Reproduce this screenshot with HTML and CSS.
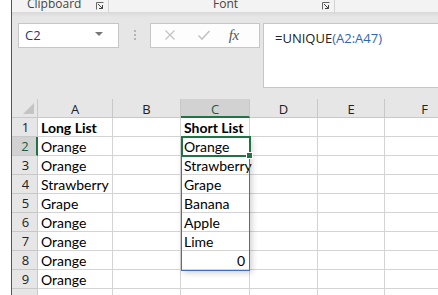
FILE: index.html
```html
<!DOCTYPE html>
<html>
<head>
<meta charset="utf-8">
<link rel="stylesheet" href="styles.css">
</head>
<body>
<div class="app">
  <div class="edge"></div>
  <div class="main">
    <div class="ribbon">
      <div class="group g-clip"><span class="glabel">Clipboard</span><span class="launch"><svg width="8" height="8" viewBox="0 0 8 8"><path d="M0.5 7.5V0.5H7.5" fill="none" stroke="#666" stroke-width="1"/><path d="M2 2L6.5 6.5M6.5 3V6.5H3" fill="none" stroke="#444" stroke-width="1"/></svg></span></div>
      <div class="group g-font"><span class="glabel">Font</span><span class="launch"><svg width="8" height="8" viewBox="0 0 8 8"><path d="M0.5 7.5V0.5H7.5" fill="none" stroke="#666" stroke-width="1"/><path d="M2 2L6.5 6.5M6.5 3V6.5H3" fill="none" stroke="#444" stroke-width="1"/></svg></span></div>
    </div>
    <div class="shadow"></div>
    <div class="fbar">
      <div class="namebox"><span class="ref">C2</span><span class="caret"></span></div>
      <div class="dots"><i></i><i></i><i></i></div>
      <div class="btns">
        <span class="btn"><svg width="12" height="12" viewBox="0 0 12 12"><path d="M1.5 1.5L10.5 10.5M10.5 1.5L1.5 10.5" stroke="#c4c4c4" stroke-width="1.3"/></svg></span>
        <span class="btn"><svg width="14" height="12" viewBox="0 0 14 12"><path d="M1.5 6.5L5 10L12.5 2" fill="none" stroke="#c4c4c4" stroke-width="1.6"/></svg></span>
        <span class="btn fx">fx</span>
      </div>
      <div class="formula">=UNIQUE<span class="blue">(A2:A47)</span></div>
    </div>
    <div class="sheet">
      <div class="row hdr">
        <div class="rh corner"><span class="tri"></span></div>
        <div class="ch">A</div><div class="ch">B</div><div class="ch sel">C</div><div class="ch">D</div><div class="ch">E</div><div class="ch">F</div>
      </div>
      <div class="row"><div class="rh">1</div><div class="c b">Long List</div><div class="c"></div><div class="c b">Short List</div><div class="c"></div><div class="c"></div><div class="c"></div></div>
      <div class="row"><div class="rh rsel">2</div><div class="c">Orange</div><div class="c"></div><div class="c">Orange</div><div class="c"></div><div class="c"></div><div class="c"></div></div>
      <div class="row"><div class="rh">3</div><div class="c">Orange</div><div class="c"></div><div class="c over">Strawberry</div><div class="c"></div><div class="c"></div><div class="c"></div></div>
      <div class="row"><div class="rh">4</div><div class="c">Strawberry</div><div class="c"></div><div class="c">Grape</div><div class="c"></div><div class="c"></div><div class="c"></div></div>
      <div class="row"><div class="rh">5</div><div class="c">Grape</div><div class="c"></div><div class="c">Banana</div><div class="c"></div><div class="c"></div><div class="c"></div></div>
      <div class="row"><div class="rh">6</div><div class="c">Orange</div><div class="c"></div><div class="c">Apple</div><div class="c"></div><div class="c"></div><div class="c"></div></div>
      <div class="row"><div class="rh">7</div><div class="c">Orange</div><div class="c"></div><div class="c">Lime</div><div class="c"></div><div class="c"></div><div class="c"></div></div>
      <div class="row"><div class="rh">8</div><div class="c">Orange</div><div class="c"></div><div class="c num">0</div><div class="c"></div><div class="c"></div><div class="c"></div></div>
      <div class="row"><div class="rh">9</div><div class="c">Orange</div><div class="c"></div><div class="c"></div><div class="c"></div><div class="c"></div><div class="c"></div></div>
      <div class="row"><div class="rh"></div><div class="c"></div><div class="c"></div><div class="c"></div><div class="c"></div><div class="c"></div><div class="c"></div></div>
      <div class="spill"></div>
      <div class="active"><span class="handle"></span></div>
    </div>
  </div>
</div>
</body>
</html>
```

FILE: styles.css
```css
html, body {
  margin: 0;
  padding: 0;
  width: 438px;
  height: 295px;
  overflow: hidden;
  background: #ffffff;
}
.app {
  display: flex;
  width: 438px;
  height: 295px;
  overflow: hidden;
}
.edge {
  flex: 0 0 11px;
  background: #ffffff;
  border-right: 1px solid #217346;
}
.main {
  flex: 1 1 auto;
  min-width: 0;
  background: #e6e6e6;
  display: flex;
  flex-direction: column;
}
.ribbon {
  height: 13px;
  background: #f3f3f3;
  display: flex;
  overflow: hidden;
  position: relative;
}
.group {
  display: flex;
  align-items: flex-start;
  height: 13px;
  border-right: 1px solid #d2d2d2;
  box-sizing: border-box;
  position: relative;
}
.g-clip { width: 97px; }
.g-font { width: 226px; }
.glabel {
  font-family: "Open Sans", "Noto Sans", sans-serif;
  font-size: 12px;
  line-height: 13px;
  color: #444444;
  margin-top: -3px;
}
.g-clip .glabel { margin-left: 15px; }
.g-font .glabel { margin-left: 104px; }
.launch {
  position: absolute;
  right: 4px;
  top: 2px;
  width: 8px;
  height: 8px;
  display: flex;
}
.shadow {
  height: 5px;
  background: linear-gradient(#d8d8d8, #e6e6e6);
}
.fbar {
  display: flex;
  align-items: flex-start;
  padding: 6px 0 11px 6px;
  height: 65px;
  box-sizing: content-box;
}
.namebox {
  width: 101px;
  height: 25px;
  box-sizing: border-box;
  background: #ffffff;
  border: 1px solid #c6c6c6;
  display: flex;
  align-items: center;
  justify-content: space-between;
  padding: 0 15px 0 6px;
  font-family: "Open Sans", "Noto Sans", sans-serif;
  font-size: 13px;
  color: #1f3a6e;
}
.caret {
  width: 0;
  height: 0;
  border-left: 4px solid transparent;
  border-right: 4px solid transparent;
  border-top: 4px solid #777777;
  margin-top: -3px;
}
.dots {
  width: 31px;
  height: 25px;
  display: flex;
  flex-direction: column;
  align-items: center;
  justify-content: center;
  gap: 2px;
}
.dots i {
  display: block;
  width: 2px;
  height: 2px;
  background: #b4b4b4;
}
.btns {
  width: 110px;
  height: 25px;
  box-sizing: border-box;
  background: #fdfdfd;
  border: 1px solid #c6c6c6;
  display: flex;
  align-items: center;
  padding-left: 13px;
}
.btn {
  width: 36px;
  display: flex;
  align-items: center;
  justify-content: flex-start;
}
.btn:nth-child(2) { padding-left: 3px; width: 33px; }
.fx {
  font-family: "Liberation Serif", serif;
  font-style: italic;
  font-size: 15px;
  color: #555555;
  letter-spacing: -0.5px;
  padding-left: 4px;
}
.formula {
  margin-left: 3px;
  flex: 1 0 auto;
  height: 65px;
  box-sizing: border-box;
  background: #ffffff;
  border: 1px solid #c6c6c6;
  border-right: none;
  padding: 5px 0 0 11px;
  font-family: "Open Sans", "Noto Sans", sans-serif;
  font-size: 13px;
  line-height: 18px;
  color: #222222;
}
.blue { color: #2f66b8; }
.sheet {
  position: relative;
  flex: 1 1 auto;
  background: #ffffff;
  overflow: hidden;
}
.row {
  display: grid;
  grid-template-columns: 26px 75px 68px 69px 68px 67px 80px;
  height: 19px;
}
.rh, .ch, .c {
  box-sizing: border-box;
  height: 19px;
  border-right: 1px solid #d4d4d4;
  border-bottom: 1px solid #d4d4d4;
  overflow: visible;
  white-space: nowrap;
}
.rh {
  background: #e6e6e6;
  border-color: #c8c8c8;
  font-family: "Open Sans", "Noto Sans", sans-serif;
  font-size: 13px;
  line-height: 19px;
  color: #222222;
  text-align: center;
  padding-left: 2px;
}
.ch {
  background: #e6e6e6;
  border-color: #c8c8c8;
  font-family: "Open Sans", "Noto Sans", sans-serif;
  font-size: 13px;
  line-height: 20px;
  color: #222222;
  text-align: center;
}
.ch.sel {
  background: #d2d2d2;
  border-bottom: 2px solid #217346;
  color: #1b5e38;
}
.rh.rsel {
  background: #d2d2d2;
  border-right: 2px solid #217346;
  color: #1b5e38;
}
.corner {
  position: relative;
}
.tri {
  position: absolute;
  right: 3px;
  bottom: 3px;
  width: 0;
  height: 0;
  border-left: 11px solid transparent;
  border-bottom: 11px solid #c4c4c4;
}
.c {
  font-family: "Lato", "Liberation Sans", sans-serif;
  font-size: 14px;
  line-height: 18px;
  padding-top: 1px;
  color: #000000;
  padding-left: 3px;
  position: relative;
  z-index: 1;
}
.c.b { font-weight: bold; }
.c.num { text-align: right; padding-right: 4px; }
.spill {
  position: absolute;
  left: 169px;
  top: 38px;
  width: 69px;
  height: 134px;
  box-sizing: border-box;
  border: 1px solid #3f6fbf;
  box-shadow: 2px 2px 6px rgba(0,0,0,0.18);
  z-index: 2;
  pointer-events: none;
}
.active {
  position: absolute;
  left: 169px;
  top: 37px;
  width: 70px;
  height: 21px;
  box-sizing: border-box;
  border: 2px solid #217346;
  z-index: 3;
}
.handle {
  position: absolute;
  right: -4px;
  bottom: -4px;
  width: 5px;
  height: 5px;
  background: #217346;
  border: 1px solid #ffffff;
}
```
